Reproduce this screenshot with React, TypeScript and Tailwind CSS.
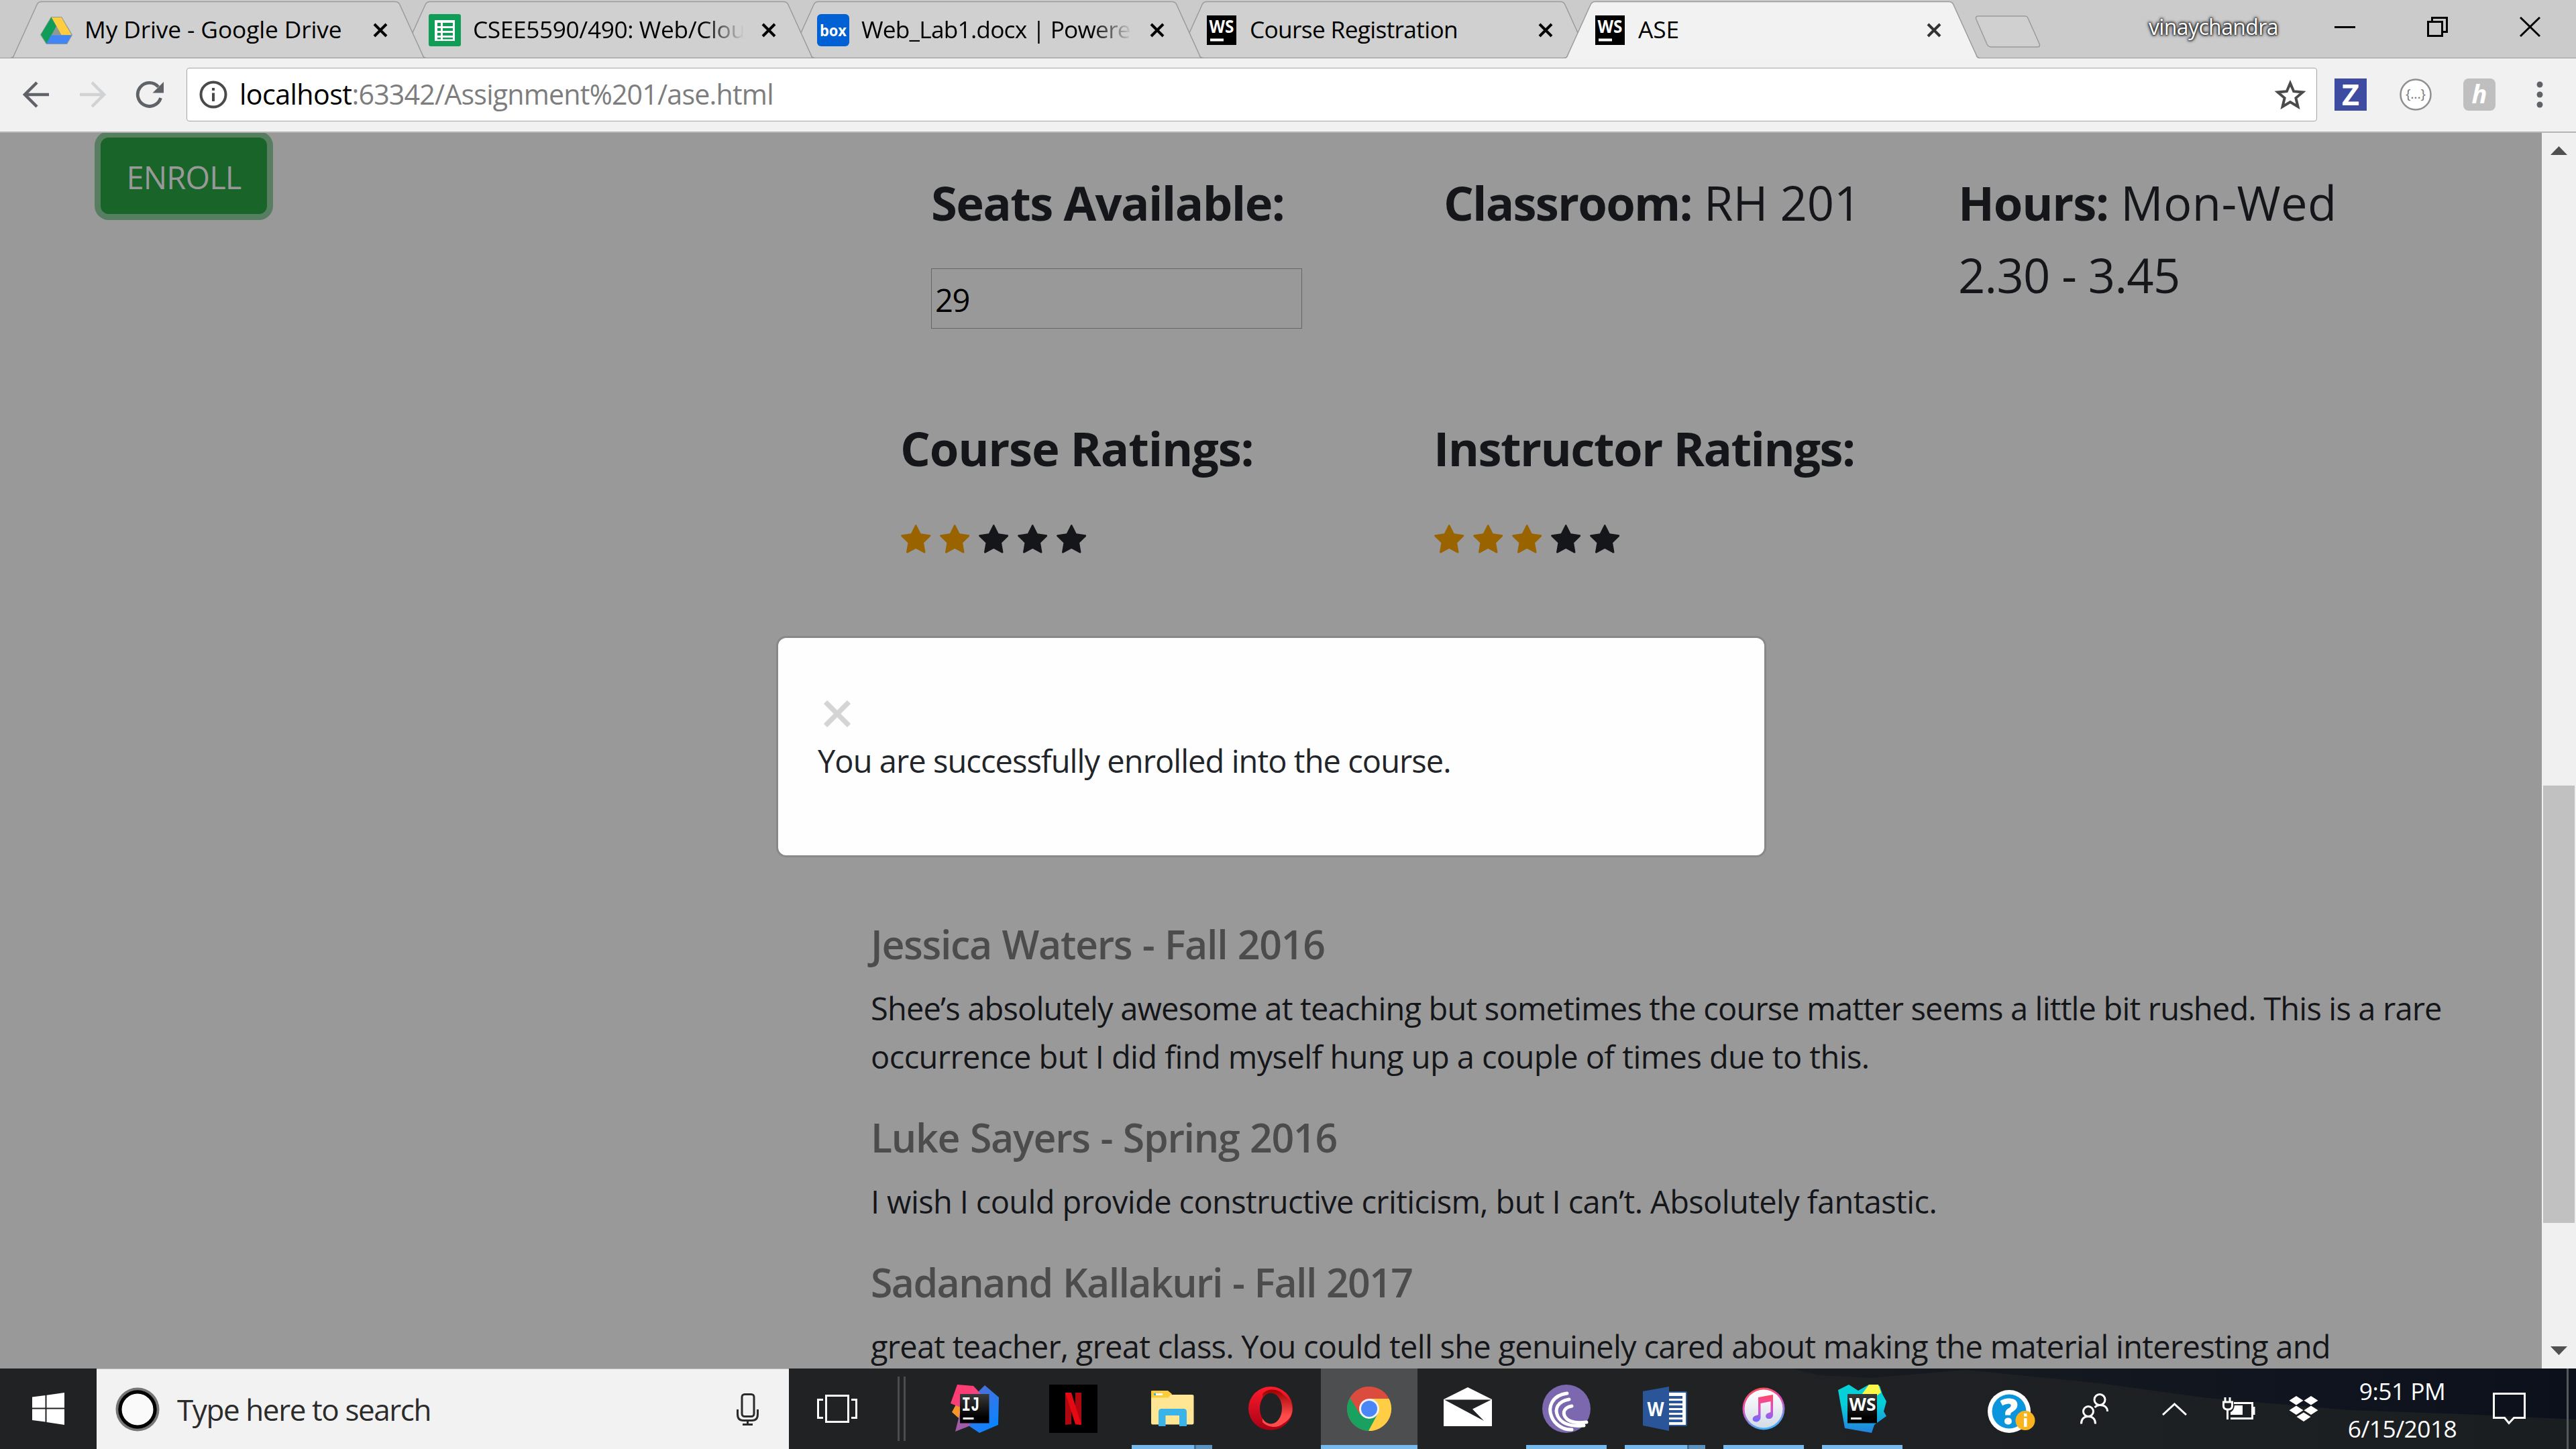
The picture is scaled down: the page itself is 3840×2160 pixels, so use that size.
import React from "react";

/* ---------- browser chrome ---------- */

const TabShape = ({ active }: { active?: boolean }) => (
  <svg viewBox="0 0 619 87" className="absolute left-0 top-0 h-[87px] w-[619px]" fill="none">
    <path
      d="M0 86.5Q4 86 5 82L39 7Q41 2.5 46 2.5H573Q578 2.5 580 7L614 82Q615 86 619 86.5V88H0Z"
      fill={active ? "#f2f2f2" : "#d0d0d0"}
    />
    <path
      d="M0 86.5Q4 86 5 82L39 7Q41 2.5 46 2.5H573Q578 2.5 580 7L614 82Q615 86 619 86.5"
      stroke="#9b9b9b"
      strokeWidth="1.5"
    />
    {!active && <path d="M0 86.5H619" stroke="#9b9b9b" strokeWidth="1.5" />}
  </svg>
);

const TabClose = ({ soft }: { soft?: boolean }) => (
  <svg viewBox="0 0 22 22" className="h-[22px] w-[22px] shrink-0">
    <path d="M2 2L20 20M20 2L2 20" stroke={soft ? "#333" : "#000"} strokeWidth="4" />
  </svg>
);

const DriveIcon = () => (
  <svg viewBox="0 0 48 48" className="size-12">
    <path d="M16 4H32L48 31L40 45H9L0 31Z" fill="#8d9a94" />
    <path d="M16.5 5L24 18L9.5 44L1 30.5Z" fill="#0f9d58" />
    <path d="M17 5H31.5L46.5 31H31.5Z" fill="#ffcd40" />
    <path d="M16.500 31.500H47L39.500 44H9Z" fill="#4285f4" />
  </svg>
);

const SheetsIcon = () => (
  <svg viewBox="0 0 48 48" className="size-12">
    <rect width="48" height="48" rx="3" fill="#0f9d58" />
    <rect x="9" y="9" width="30" height="31" fill="#fff" />
    <g fill="#0f9d58">
      <rect x="13" y="13" width="5" height="5" /><rect x="21" y="13" width="15" height="5" />
      <rect x="13" y="21" width="5" height="4" /><rect x="21" y="21" width="15" height="4" />
      <rect x="13" y="28" width="5" height="4" /><rect x="21" y="28" width="15" height="4" />
      <rect x="13" y="35" width="5" height="2.500" /><rect x="21" y="35" width="15" height="2.500" />
    </g>
  </svg>
);

const BoxIcon = () => (
  <svg viewBox="0 0 48 48" className="size-12">
    <rect width="48" height="48" rx="6" fill="#0061d5" />
    <text x="24" y="33" textAnchor="middle" fontFamily="Open Sans" fontWeight="700" fontSize="24" textLength="40" lengthAdjust="spacingAndGlyphs" fill="#fff">box</text>
  </svg>
);

const WsFavicon = () => (
  <svg viewBox="0 0 48 48" className="size-12">
    <rect x="2" y="2" width="44" height="44" fill="#000" />
    <text x="24" y="28" textAnchor="middle" fontFamily="Open Sans" fontWeight="700" fontSize="27" textLength="37" lengthAdjust="spacingAndGlyphs" fill="#fff">WS</text>
    <rect x="7" y="36.500" width="20" height="4" fill="#fff" />
  </svg>
);

const tabs = [
  { icon: <DriveIcon />, title: "My Drive - Google Drive", z: "z-[4]", ls: "tracking-[-0.12px]" },
  { icon: <SheetsIcon />, title: "CSEE5590/490: Web/Cloud", z: "z-[3]", ls: "tracking-[-0.4px]", fade: true },
  { icon: <BoxIcon />, title: "Web_Lab1.docx | Powered by", z: "z-[2]", ls: "tracking-[-0.8px]", fade: true },
  { icon: <WsFavicon />, title: "Course Registration", z: "z-[1]", ls: "tracking-[-0.68px]" },
  { icon: <WsFavicon />, title: "ASE", z: "z-[5]", ls: "tracking-[-0.1px]", active: true },
];

const TabStrip = () => (
  <div className="flex h-[87px] shrink-0 border-b-[1.5px] border-[#9b9b9b] bg-[#cbcbcb] pl-4">
    {tabs.map((t) => (
      <div key={t.title} className={"relative -mr-10 flex h-[87px] w-[619px] shrink-0 items-center " + t.z}>
        <TabShape active={t.active} />
        <div className="relative flex w-full items-center pb-px pl-11 pt-[3px]">
          {t.icon}
          <span
            className={
              "ml-[18px] w-[404px] overflow-hidden whitespace-nowrap pb-1 text-[35.3px] leading-[52px] text-black " +
              t.ls +
              (t.fade ? " [mask-image:linear-gradient(to_right,#000_85%,transparent_100%)]" : "")
            }
          >
            {t.title}
          </span>
          <span className="ml-[26px] flex"><TabClose soft={t.active} /></span>
        </div>
      </div>
    ))}
    <svg viewBox="0 0 98 48" className="ml-[33px] mt-[23px] h-12 w-[98px]">
      <path d="M5 1H74Q78 1 79 4L96 42Q98 47 93 47H25Q20 47 18 43L2 6Q0 1 5 1Z" fill="#d0d0d0" stroke="#9b9b9b" strokeWidth="1.500" />
    </svg>
    <span className="ml-auto pb-2 text-[32px] leading-[80px] tracking-[-0.6px] text-white [text-shadow:0_0_3px_#222,0_0_3px_#222,0_0_5px_#333,0_0_5px_#333]">
      vinaychandra
    </span>
    <svg viewBox="0 0 31 30" className="ml-[84px] mt-[25px] h-[30px] w-[31px]"><path d="M0 15.500H31" stroke="#000" strokeWidth="3" /></svg>
    <svg viewBox="0 0 31 30" className="ml-[107px] mt-[25px] h-[30px] w-[31px]" fill="none" stroke="#000" strokeWidth="3">
      <path d="M1.500 7.500H22.500V28.500H1.500ZM7.500 7V1.500H29.500V22.500H23" />
    </svg>
    <svg viewBox="0 0 31 30" className="ml-[107px] mr-[53px] mt-[25px] h-[30px] w-[31px]"><path d="M1 1L30 29M30 1L1 29" stroke="#000" strokeWidth="3" /></svg>
  </div>
);

const Toolbar = () => (
  <div className="flex h-[111px] shrink-0 items-center border-b-2 border-[#b5b5b5] bg-[#f1f1f1] pb-px pl-[34px]">
    <svg viewBox="0 0 40 40" className="size-10" fill="none" stroke="#5f6368" strokeWidth="4.500"><path d="M21 2L3 20L21 38M3 20H39" /></svg>
    <svg viewBox="0 0 40 40" className="ml-11 size-10" fill="none" stroke="#d0d2d4" strokeWidth="4.500"><path d="M19 2L37 20L19 38M37 20H1" /></svg>
    <svg viewBox="0 0 42 40" className="ml-11 h-10 w-[42px]">
      <path d="M34 8.500A17.500 17.500 0 1 0 37.500 25" fill="none" stroke="#5f6368" strokeWidth="4.800" />
      <path d="M42 1V17.500H25.500Z" fill="#5f6368" />
    </svg>
    <div className="ml-[34px] flex h-20 w-[3176px] items-center rounded-[4px] border-[1.500px] border-[#a6a6a6] bg-white pl-[18px] pr-4">
      <svg viewBox="0 0 42 42" className="size-[42px]">
        <circle cx="21" cy="21" r="18.500" fill="none" stroke="#4a4a4a" strokeWidth="4" />
        <rect x="19" y="18.500" width="4" height="12.500" fill="#4a4a4a" /><rect x="19" y="11" width="4" height="4" fill="#4a4a4a" />
      </svg>
      <div className="ml-[18px] flex-1 pb-0.5 text-[41.2px] leading-[60px]">
        <span className="tracking-[-0.57px] text-black">localhost</span>
        <span className="tracking-[-0.82px] text-[#7d7d7d]">:63342/Assignment%201/ase.html</span>
      </div>
      <svg viewBox="0 0 46 44" className="h-11 w-[46px]">
        <path d="M23 5L28.200 17.200L41.500 18.400L31.400 27.100L34.500 40L23 33.100L11.500 40L14.600 27.100L4.500 18.400L17.800 17.200Z" fill="none" stroke="#4a4a4a" strokeWidth="4" />
      </svg>
    </div>
    <svg viewBox="0 0 48 48" className="ml-[26px] size-12">
      <rect width="48" height="48" fill="#3d4ba1" />
      <text x="24" y="39.500" textAnchor="middle" fontFamily="Open Sans" fontWeight="700" fontSize="43" textLength="26" lengthAdjust="spacingAndGlyphs" fill="#fff">Z</text>
    </svg>
    <svg viewBox="0 0 48 48" className="ml-[49px] size-12">
      <circle cx="24" cy="24" r="22.500" fill="#fff" stroke="#8f8f8f" strokeWidth="2.500" />
      <text x="24" y="30" textAnchor="middle" fontFamily="Open Sans" fontSize="20" textLength="30" fill="#777">{"{...}"}</text>
    </svg>
    <svg viewBox="0 0 48 48" className="ml-[47px] size-12">
      <rect width="48" height="48" rx="8" fill="#bfbfbf" />
      <text x="24" y="37" textAnchor="middle" fontFamily="Open Sans" fontStyle="italic" fontWeight="700" fontSize="38" fill="#fff">h</text>
    </svg>
    <svg viewBox="0 0 10 40" className="ml-[61px] h-10 w-[10px]" fill="#5f6368">
      <circle cx="5" cy="5" r="4.500" /><circle cx="5" cy="20" r="4.500" /><circle cx="5" cy="35" r="4.500" />
    </svg>
  </div>
);

/* ---------- page ---------- */

const Star = ({ on }: { on: boolean }) => (
  <svg viewBox="64 32 1664 1587" className="h-[42.5px] w-[44.5px]" fill={on ? "#996300" : "#14161a"}>
    <path d="M1728 647q0 22-26 48l-363 354 86 500q1 7 1 20 0 21-10.500 35.500t-30.500 14.500q-19 0-40-12l-449-236-449 236q-22 12-40 12-21 0-31.500-14.500t-10.500-35.500q0-6 2-20l86-500-364-354q-25-27-25-48 0-37 56-46l502-73 225-455q19-41 49-41t49 41l225 455 502 73q56 9 56 46z" />
  </svg>
);

const Rating = ({ label, score, ls }: { label: string; score: number; ls: string }) => (
  <div className="w-[795px]">
    <h4 className={"pl-px text-[70.5px] font-bold leading-[108px] " + ls}>{label}</h4>
    <div className="mt-[60px] flex gap-[13.4px] pl-[2px]">
      {[1, 2, 3, 4, 5].map((n) => <Star key={n} on={n <= score} />)}
    </div>
  </div>
);

const reviews = [
  {
    author: "Jessica Waters - Fall 2016",
    ls: "tracking-[-1.3px] [word-spacing:1.5px]",
    lines: [
      { t: "Shee’s absolutely awesome at teaching but sometimes the course matter seems a little bit rushed. This is a rare", ls: "tracking-[-0.82px]" },
      { t: "occurrence but I did find myself hung up a couple of times due to this.", ls: "tracking-[-0.58px]" },
    ],
  },
  {
    author: "Luke Sayers - Spring 2016",
    ls: "tracking-[-1.25px] [word-spacing:1.5px]",
    lines: [{ t: "I wish I could provide constructive criticism, but I can’t. Absolutely fantastic.", ls: "tracking-[-0.62px]" }],
  },
  {
    author: "Sadanand Kallakuri - Fall 2017",
    ls: "tracking-[-1.6px] [word-spacing:1.5px]",
    lines: [{ t: "great teacher, great class. You could tell she genuinely cared about making the material interesting and", ls: "tracking-[-0.73px]" }],
  },
];

const Page = () => (
  <div className="relative flex w-[3789px] overflow-hidden bg-[#999] text-[#14161a]">
    <div className="w-[1297px] shrink-0 pl-[150px] pt-[7px]">
      <button className="h-[114px] w-[248px] rounded-[12px] bg-[#186429] pt-[4px] text-[47px] tracking-[-0.84px] text-[#999] shadow-[0_0_0_9px_#587e61]">
        ENROLL
      </button>
    </div>
    <div className="shrink-0 pt-[50px]">
      <div className="flex h-[242px] pl-[91px]">
        <div className="w-[763px]">
          <h4 className="text-[70.5px] font-bold leading-[108px] tracking-[-1.6px]">Seats Available:</h4>
          <div className="mt-[44px] h-[90px] w-[553px] border-[1.500px] border-[#666] pl-[5px] text-[47px] leading-[92px] tracking-[-1.4px] text-black">29</div>
        </div>
        <div className="w-[768px] pl-px text-[70.5px] leading-[108px]">
          <b className="tracking-[-1.8px]">Classroom:</b> <span className="tracking-[-0.1px]">RH 201</span>
        </div>
        <div className="text-[70.5px] leading-[108px]">
          <div><b className="tracking-[-1.2px]">Hours:</b> <span className="tracking-[0.4px]">Mon-Wed</span></div>
          <div className="tracking-[-0.7px]">2.30 - 3.45</div>
        </div>
      </div>
      <div className="mt-[124px] flex pl-[44px]">
        <Rating label="Course Ratings:" score={2} ls="tracking-[-1.2px]" />
        <Rating label="Instructor Ratings:" score={3} ls="tracking-[-1.55px]" />
      </div>
      <div className="mt-[546px] pl-px">
        {reviews.map((r) => (
          <div key={r.author} className="mb-12">
            <h5 className={"mb-6 text-[59px] font-semibold leading-[72px] text-[#4c4c4c] " + r.ls}>{r.author}</h5>
            {r.lines.map((l) => (
              <p key={l.t} className={"whitespace-nowrap text-[47px] leading-[72px] " + l.ls}>{l.t}</p>
            ))}
          </div>
        ))}
      </div>
    </div>
    <div className="absolute left-[1157px] top-[750px] h-[330px] w-[1476px] rounded-[15px] border-[3px] border-[#888] bg-[#fefefe] pl-[59px] pt-[93px] text-[#212529]">
      <svg viewBox="0 0 40 40" className="ml-[9px] size-10"><path d="M2.500 2.500L37.500 37.500M37.500 2.500L2.500 37.500" stroke="#d4d4d4" strokeWidth="7.500" /></svg>
      <p className="mt-[14px] whitespace-nowrap text-[47px] leading-[72px] tracking-[-0.94px]">You are successfully enrolled into the course.</p>
    </div>
  </div>
);

const Scrollbar = () => (
  <div className="flex w-[51px] flex-col items-center bg-[#f0f0f0]">
    <svg viewBox="0 0 25 13" className="mt-5 h-[13px] w-[25px]"><path d="M0 13L12.500 0L25 13Z" fill="#505050" /></svg>
    <div className="mt-[940px] h-[652px] w-[47px] bg-[#c1c1c1]" />
    <svg viewBox="0 0 25 13" className="mb-5 mt-auto h-[13px] w-[25px]"><path d="M0 0L12.500 13L25 0Z" fill="#505050" /></svg>
  </div>
);

/* ---------- taskbar ---------- */

const IntelliJ = () => (
  <svg viewBox="0 0 72 72" className="size-[72px]">
    <defs>
      <linearGradient id="ijA" x1="0" y1="0" x2="0.6" y2="1"><stop offset="0" stopColor="#5b6bd0" /><stop offset="1" stopColor="#0a84ff" /></linearGradient>
      <linearGradient id="ijB" x1="0" y1="0" x2="1" y2="1"><stop offset="0.4" stopColor="#ff3d75" /><stop offset="1" stopColor="#b25fb0" /></linearGradient>
      <linearGradient id="ijC" x1="0" y1="0" x2="0" y2="1"><stop offset="0" stopColor="#3a3a3a" /><stop offset="0.8" stopColor="#000" /></linearGradient>
    </defs>
    <path d="M2 41L9 28L22 40L12 50Z" fill="#f7942a" />
    <path d="M14 42L7 70L40 57Z" fill="#a05ca8" />
    <path d="M51 1L72 19L71 60L43 72L28 62L40 12Z" fill="url(#ijA)" />
    <path d="M10 0L34 2L48 17L30 40L0 28Z" fill="url(#ijB)" />
    <rect x="14" y="14" width="43.500" height="43.500" fill="url(#ijC)" />
    <text x="16.500" y="39" fontFamily="Liberation Mono" fontWeight="700" fontSize="30" textLength="27" fill="#fff" lengthAdjust="spacingAndGlyphs">IJ</text>
    <rect x="18.500" y="49" width="16" height="3" fill="#fff" />
  </svg>
);

const Netflix = () => (
  <svg viewBox="0 0 72 72" className="size-[72px]">
    <rect width="72" height="72" fill="#000" />
    <path d="M24 12H33V59L24 60ZM39 12H48V60L39 59Z" fill="#b1060f" />
    <path d="M24 12H33L48 60L39 59Z" fill="#e50914" />
  </svg>
);

const Explorer = () => (
  <svg viewBox="0 0 72 72" className="size-[72px]">
    <path d="M5 9.500H29L36 15H66Q68.500 15 68.500 17V57Q68.500 59.500 66 59.500H7Q5 59.500 5 57Z" fill="#ffe694" />
    <path d="M5 11Q5 9 7 9H30L36 14L30 19.500H5Z" fill="#fccd3a" />
    <rect x="9" y="13" width="13" height="3" fill="#fff" /><rect x="9" y="13" width="3" height="3" fill="#3ab4e8" />
    <path d="M16 62V41Q16 36 20.500 36H53.500Q58 36 58 41V62H47V46H26.500V62Z" fill="#3ab4e8" />
  </svg>
);

const Opera = () => (
  <svg viewBox="0 0 72 72" className="size-[72px]">
    <defs>
      <linearGradient id="opA" x1="0" y1="0" x2="0" y2="1"><stop offset="0" stopColor="#ff1b2d" /><stop offset="1" stopColor="#a70014" /></linearGradient>
      <linearGradient id="opB" x1="0" y1="0" x2="0" y2="1"><stop offset="0" stopColor="#9c0000" /><stop offset="0.7" stopColor="#ff4b4b" /></linearGradient>
    </defs>
    <ellipse cx="36" cy="35.500" rx="33" ry="32.500" fill="url(#opA)" />
    <path d="M24 14C34 3 50 8 55 15C74 28 72 48 55 58C46 66 32 64 24 56Z" fill="url(#opB)" />
    <ellipse cx="36.500" cy="35.500" rx="16.500" ry="23" fill="#202224" />
  </svg>
);

const Chrome = () => (
  <svg viewBox="0 0 72 72" className="size-[72px]">
    <circle cx="36" cy="36" r="33" fill="#db4c3f" />
    <path d="M7.400 19.500A33 33 0 0 0 36 69L50 45L36 36H20Z" fill="#19a15f" />
    <path d="M65.500 21A33 33 0 0 1 35 69L49 43L36 21Z" fill="#ffce44" />
    <path d="M7.400 19.500L22 44L36 36V21H65.500A33 33 0 0 0 7.400 19.500Z" fill="#db4c3f" />
    <circle cx="36" cy="36" r="15" fill="#f1f1f1" /><circle cx="36" cy="36" r="12" fill="#4a86f5" />
  </svg>
);

const Mail = () => (
  <svg viewBox="0 0 72 72" className="size-[72px]">
    <path d="M0 22L36 4L72 22V62H0Z" fill="#fff" /><path d="M1 22.500H71L43 36.500L60 54Z" fill="#202224" />
  </svg>
);

const BitTorrent = () => (
  <svg viewBox="0 0 72 72" className="size-[72px]">
    <circle cx="36" cy="36" r="36" fill="#7b68ae" />
    <g fill="none" stroke="#fff" strokeWidth="5" strokeLinecap="round">
      <path d="M37 13C14 16 8 34 14 48C18 58 30 68 44 67" /><path d="M40 22C23 25 18 36 23 47C28 57 40 63 62 61" /><path d="M44 32C33 34 30 41 34 48C39 56 50 58 66 56" />
    </g>
  </svg>
);

const Word = () => (
  <svg viewBox="0 0 72 72" className="size-[72px]">
    <rect x="38" y="10" width="31" height="52" rx="2" fill="#2b579a" /><rect x="38" y="12" width="29" height="48" fill="#fff" />
    <g fill="#2b579a">
      <rect x="38" y="17" width="24" height="4" /><rect x="38" y="24" width="24" height="4" /><rect x="38" y="31" width="24" height="4" />
      <rect x="38" y="38" width="24" height="4" /><rect x="38" y="45" width="24" height="4" /><rect x="38" y="52" width="24" height="4" />
    </g>
    <path d="M3 10L42 3V69L3 61Z" fill="#2a5699" />
    <text x="22" y="47" textAnchor="middle" fontFamily="Open Sans" fontWeight="700" fontSize="29" textLength="25" lengthAdjust="spacingAndGlyphs" fill="#fff">W</text>
  </svg>
);

const ITunes = () => (
  <svg viewBox="0 0 72 72" className="size-[72px]">
    <defs>
      <linearGradient id="itA" x1="0.300" y1="0" x2="0.600" y2="1"><stop offset="0" stopColor="#ff4f4f" /><stop offset="0.400" stopColor="#e04fc0" /><stop offset="1" stopColor="#35b8ff" /></linearGradient>
      <linearGradient id="itB" x1="0" y1="0" x2="0" y2="1"><stop offset="0" stopColor="#ff4a5f" /><stop offset="0.500" stopColor="#e24bc8" /><stop offset="1" stopColor="#6a6cff" /></linearGradient>
      <linearGradient id="itC" x1="0" y1="0" x2="0" y2="1"><stop offset="0" stopColor="#fff" /><stop offset="1" stopColor="#d3dbe6" /></linearGradient>
    </defs>
    <circle cx="36" cy="36" r="31.500" fill="url(#itA)" /><circle cx="36" cy="36" r="28.500" fill="url(#itC)" />
    <path d="M28 19L50 15V45C50 49 47 51 44 51C37 51 38 43 44 42L46.500 41V25L31.500 28V49C31.500 53 28 55.500 25 55.500C17 55 19 47 25 46L28 45Z" fill="url(#itB)" />
  </svg>
);

const WebStorm = () => (
  <svg viewBox="0 0 72 72" className="size-[72px]">
    <defs>
      <linearGradient id="wsA" x1="0" y1="0" x2="0" y2="1"><stop offset="0.400" stopColor="#07cfd8" /><stop offset="1" stopColor="#2480e0" /></linearGradient>
      <linearGradient id="wsB" x1="0" y1="0" x2="0" y2="1"><stop offset="0" stopColor="#3a3a3a" /><stop offset="0.800" stopColor="#000" /></linearGradient>
    </defs>
    <path d="M0 8L16 0L30 9L46 0L62 2L66 14L72 25L68 40L72 47L54 60L50 72L10 65Z" fill="url(#wsA)" />
    <path d="M46 0H60L64 12L50 22H30Z" fill="#fcf84a" />
    <rect x="14" y="14" width="44" height="43.500" fill="url(#wsB)" />
    <text x="36.500" y="39" textAnchor="middle" fontFamily="Open Sans" fontWeight="700" fontSize="27" textLength="40" lengthAdjust="spacingAndGlyphs" fill="#fff">WS</text>
    <rect x="19" y="49" width="16" height="3" fill="#fff" />
  </svg>
);

const Underline = ({ kind }: { kind: "none" | "full" | "open" | "stack" }) => {
  if (kind === "none") return null;
  if (kind === "full") return <div className="absolute inset-x-0 bottom-0 h-[6px] bg-[#76b9ed]" />;
  return (
    <div className="absolute inset-x-3 bottom-0 flex h-[6px]">
      <div className="flex-1 bg-[#76b9ed]" />
      {kind === "stack" && <div className="w-[3px] bg-[#47708f]" />}
      {kind === "stack" && <div className="w-6 bg-[#5c93be]" />}
    </div>
  );
};

const apps: { id: string; icon: React.ReactNode; kind: "none" | "full" | "open" | "stack" }[] = [
  { id: "ij", icon: <IntelliJ />, kind: "none" },
  { id: "netflix", icon: <Netflix />, kind: "none" },
  { id: "explorer", icon: <Explorer />, kind: "stack" },
  { id: "opera", icon: <Opera />, kind: "none" },
  { id: "chrome", icon: <Chrome />, kind: "full" },
  { id: "mail", icon: <Mail />, kind: "none" },
  { id: "bittorrent", icon: <BitTorrent />, kind: "open" },
  { id: "word", icon: <Word />, kind: "stack" },
  { id: "itunes", icon: <ITunes />, kind: "open" },
  { id: "webstorm", icon: <WebStorm />, kind: "open" },
];

const Taskbar = () => (
  <div className="relative flex h-[120px] shrink-0 items-center bg-[linear-gradient(to_right,#202224_65%,#1b1e21_100%)] text-white">
    <svg viewBox="0 0 1170 120" className="absolute right-0 top-0 h-[120px] w-[1170px]">
      <defs><linearGradient id="sky" x1="0" y1="0" x2="1" y2="0"><stop offset="0" stopColor="#191c20" /><stop offset="0.600" stopColor="#10151f" /><stop offset="1" stopColor="#0b101b" /></linearGradient></defs>
      <path d="M0 0H1170V76L1000 68L830 62L620 44L460 22L260 2L120 14L40 10Z" fill="url(#sky)" />
    </svg>
    <div className="relative flex h-full w-full items-center">
      <div className="flex w-36 shrink-0 justify-center">
        <svg viewBox="0 0 48 48" className="size-12" fill="#fff"><path d="M0 6.500L19.500 4V22.500H0ZM21.500 3.700L48 0V22.500H21.500ZM0 24.500H19.500V43.500L0 41ZM21.500 24.500H48V48L21.500 44Z" /></svg>
      </div>
      <div className="flex h-full w-[1032px] shrink-0 items-center border-t-[1.500px] border-[#b8b8b8] bg-[#f2f2f2] pl-7 pr-[45px]">
        <svg viewBox="0 0 66 66" className="size-[66px]">
          <circle cx="33" cy="33" r="32.500" fill="#767676" /><circle cx="33" cy="33" r="28.700" fill="#000" /><circle cx="33" cy="33" r="23.500" fill="#fafafa" />
        </svg>
        <span className="ml-[26px] flex-1 pt-px text-[44px] leading-[60px] tracking-[-1.41px] text-[#2b2b2b]">Type here to search</span>
        <svg viewBox="0 0 33 48" className="h-12 w-[33px]" fill="none" stroke="#2b2b2b" strokeWidth="3">
          <rect x="8" y="1.500" width="18" height="33" rx="4" /><path d="M1.500 24V31Q1.500 40.500 10 40.500H23Q31.500 40.500 31.500 31V24M16.500 41V46M9 46.500H24" />
        </svg>
      </div>
      <svg viewBox="0 0 60 42" className="ml-[42px] h-[42px] w-[60px] shrink-0" fill="none" stroke="#fff" strokeWidth="3">
        <path d="M13.500 1.500H46.500V40.500H13.500ZM9 7.500H1.500V34.500H9M51 7.500H58.500V34.500H51" />
      </svg>
      <div className="ml-[60px] flex h-24 w-3 shrink-0 gap-[6px]"><div className="w-[3px] bg-[#4a4c4e]" /><div className="w-[3px] bg-[#4a4c4e]" /></div>
      <div className="ml-[31px] flex h-full shrink-0 gap-[3px]">
        {apps.map((a) => (
          <div key={a.id} className={"relative flex w-36 items-center justify-center " + (a.id === "chrome" ? "bg-[#4d4e50]" : "")}>
            {a.icon}
            <Underline kind={a.kind} />
          </div>
        ))}
      </div>
      <svg viewBox="0 0 72 72" className="ml-[115px] size-[72px] shrink-0">
        <circle cx="32" cy="40" r="32" fill="#fff" /><circle cx="32" cy="40" r="25.500" fill="#0a95dc" />
        <text x="32" y="59" textAnchor="middle" fontFamily="Open Sans" fontWeight="800" fontSize="53" fill="#fff">?</text>
        <circle cx="56" cy="53.500" r="14.500" fill="#f9b31e" />
        <rect x="54" y="43" width="4.500" height="4.500" fill="#fff" /><rect x="54" y="50" width="4.500" height="13" fill="#fff" />
      </svg>
      <svg viewBox="0 0 42 46" className="ml-[66px] h-[46px] w-[42px] shrink-0" fill="none" stroke="#fff" strokeWidth="3">
        <circle cx="29" cy="9.500" r="8" /><circle cx="12" cy="27" r="7.500" />
        <path d="M1.500 45.500C1.500 38 6 34.500 12 34.500S22.500 38 22.500 45.500M21.500 21C24 18.500 26 17.500 29 17.500C36 17.500 40.500 21 40.500 27" />
      </svg>
      <svg viewBox="0 0 37 19" className="ml-20 h-[19px] w-[37px] shrink-0" fill="none" stroke="#fff" strokeWidth="3"><path d="M1 18L18.500 2L36 18" /></svg>
      <svg viewBox="0 0 49 34" className="ml-[53px] h-[34px] w-[49px] shrink-0" fill="none" stroke="#fff" strokeWidth="3">
        <path d="M4 0V6M11 0V6M1.500 7H14.500V13Q14.500 17 10 18H6Q1.500 17 1.500 13ZM7.500 18V33M17 8.500H44.500V31.500H12" /><path d="M47 14V26" />
        <path d="M18 12H30V26H12V22Q17 20 18 12Z" fill="#fff" stroke="none" />
      </svg>
      <svg viewBox="0 0 44 40" className="ml-[50px] h-10 w-11 shrink-0" fill="#fff">
        <path d="M11 1L21.500 7.800L11 14.500L0.500 7.800ZM33 1L43.500 7.800L33 14.500L22.500 7.800ZM11 15.500L21.500 22.200L11 29L0.500 22.200ZM33 15.500L43.500 22.200L33 29L22.500 22.200ZM22 25.500L32.500 32L22 39L11.500 32Z" />
      </svg>
      <div className="ml-10 w-[170px] shrink-0 pt-px text-center text-[35.3px] leading-[56px] tracking-[-0.52px]"><div>9:51 PM</div><div>6/15/2018</div></div>
      <svg viewBox="0 0 49 48" className="ml-[50px] h-12 w-[49px] shrink-0" fill="none" stroke="#fff" strokeWidth="3"><path d="M1.500 1.500H47.500V37.500H31.500L24 45.500L17.500 37.500H1.500Z" /></svg>
      <div className="ml-[61px] h-full w-[3px] bg-[#54575c]" />
    </div>
  </div>
);

export default function App() {
  return (
    <div className="flex h-[2160px] w-[3840px] flex-col overflow-hidden font-['Open_Sans',sans-serif]">
      <TabStrip />
      <Toolbar />
      <div className="flex h-[1842px] shrink-0 overflow-hidden">
        <Page />
        <Scrollbar />
      </div>
      <Taskbar />
    </div>
  );
}
